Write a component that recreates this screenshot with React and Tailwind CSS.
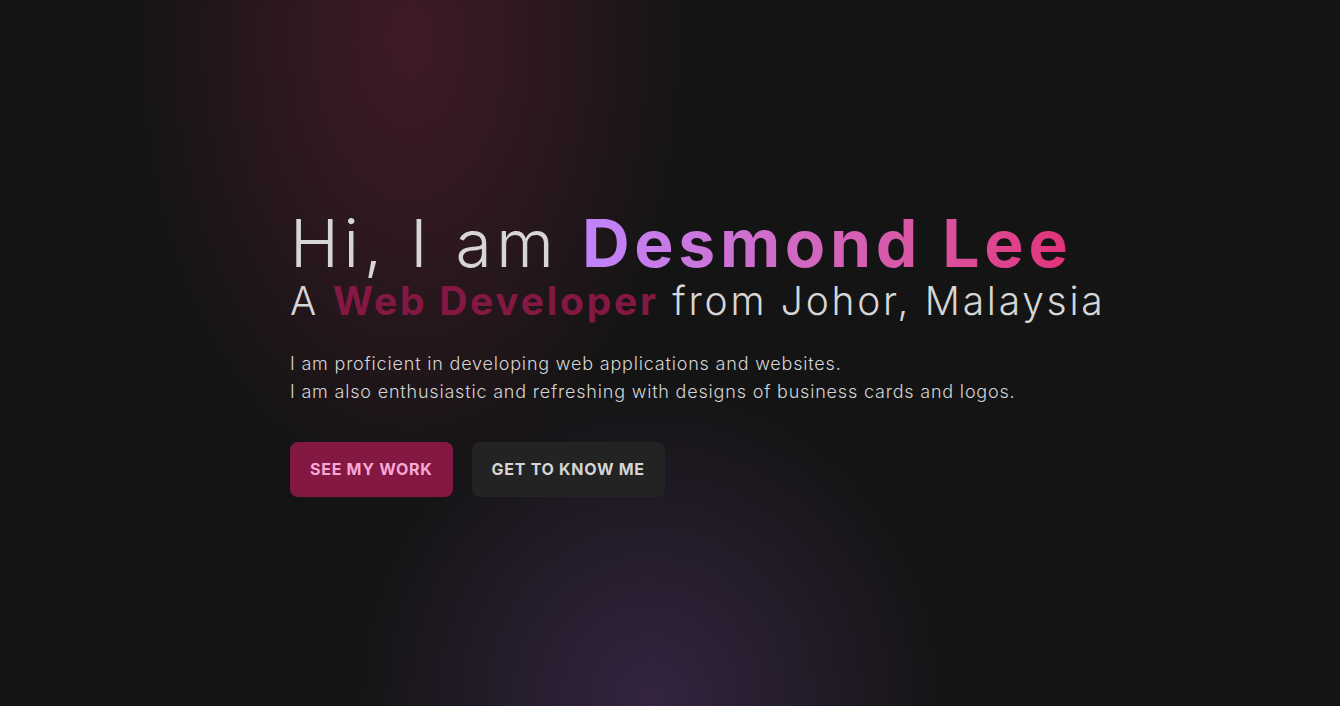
export default function App() {
  return (
    <div className="relative min-h-screen w-full overflow-hidden bg-[#141414] font-['Inter',_'Liberation_Sans',_sans-serif]">
      <div className="pointer-events-none absolute inset-0 bg-[radial-gradient(ellipse_280px_460px_at_410px_40px,rgba(62,26,39,1),rgba(62,26,39,0.6)_45%,rgba(20,20,20,0)_100%)]" />
      <div className="pointer-events-none absolute inset-0 bg-[radial-gradient(ellipse_300px_320px_at_650px_700px,rgba(52,36,64,1),rgba(52,36,64,0.5)_50%,rgba(20,20,20,0)_100%)]" />
      <div className="relative flex min-h-screen items-center justify-center">
        <div className="w-[760px] pb-[3px]">
          <h1 className="whitespace-nowrap text-[66px] leading-[72px] font-light tracking-[0.071em] text-[#d6d6d6]">
            Hi, I am{" "}
            <span className="inline-block bg-gradient-to-r from-[#c084fc] to-[#e1307a] bg-clip-text font-bold text-transparent">
              Desmond Lee
            </span>
          </h1>
          <h2 className="whitespace-nowrap text-[39px] leading-[44px] font-light tracking-[0.07em] text-[#d6d6d6]">
            A <span className="inline-block font-bold text-[#831843]">Web Developer</span> from Johor, Malaysia
          </h2>
          <div className="mt-[27px] text-[18px] leading-[28px] font-light tracking-[0.045em] text-[#d4d4d4]">
            <p>I am proficient in developing web applications and websites.</p>
            <p>I am also enthusiastic and refreshing with designs of business cards and logos.</p>
          </div>
          <div className="mt-[36px] flex gap-[19px]">
            <button className="h-[55px] rounded-lg bg-[#831843] px-5 text-[16px] font-bold uppercase tracking-[0.045em] text-[#f9a8d4]">
              See my work
            </button>
            <button className="h-[55px] rounded-lg bg-[#232323] px-5 text-[16px] font-bold uppercase tracking-[0.045em] text-[#d4d4d4]">
              Get to know me
            </button>
          </div>
        </div>
      </div>
    </div>
  );
}
